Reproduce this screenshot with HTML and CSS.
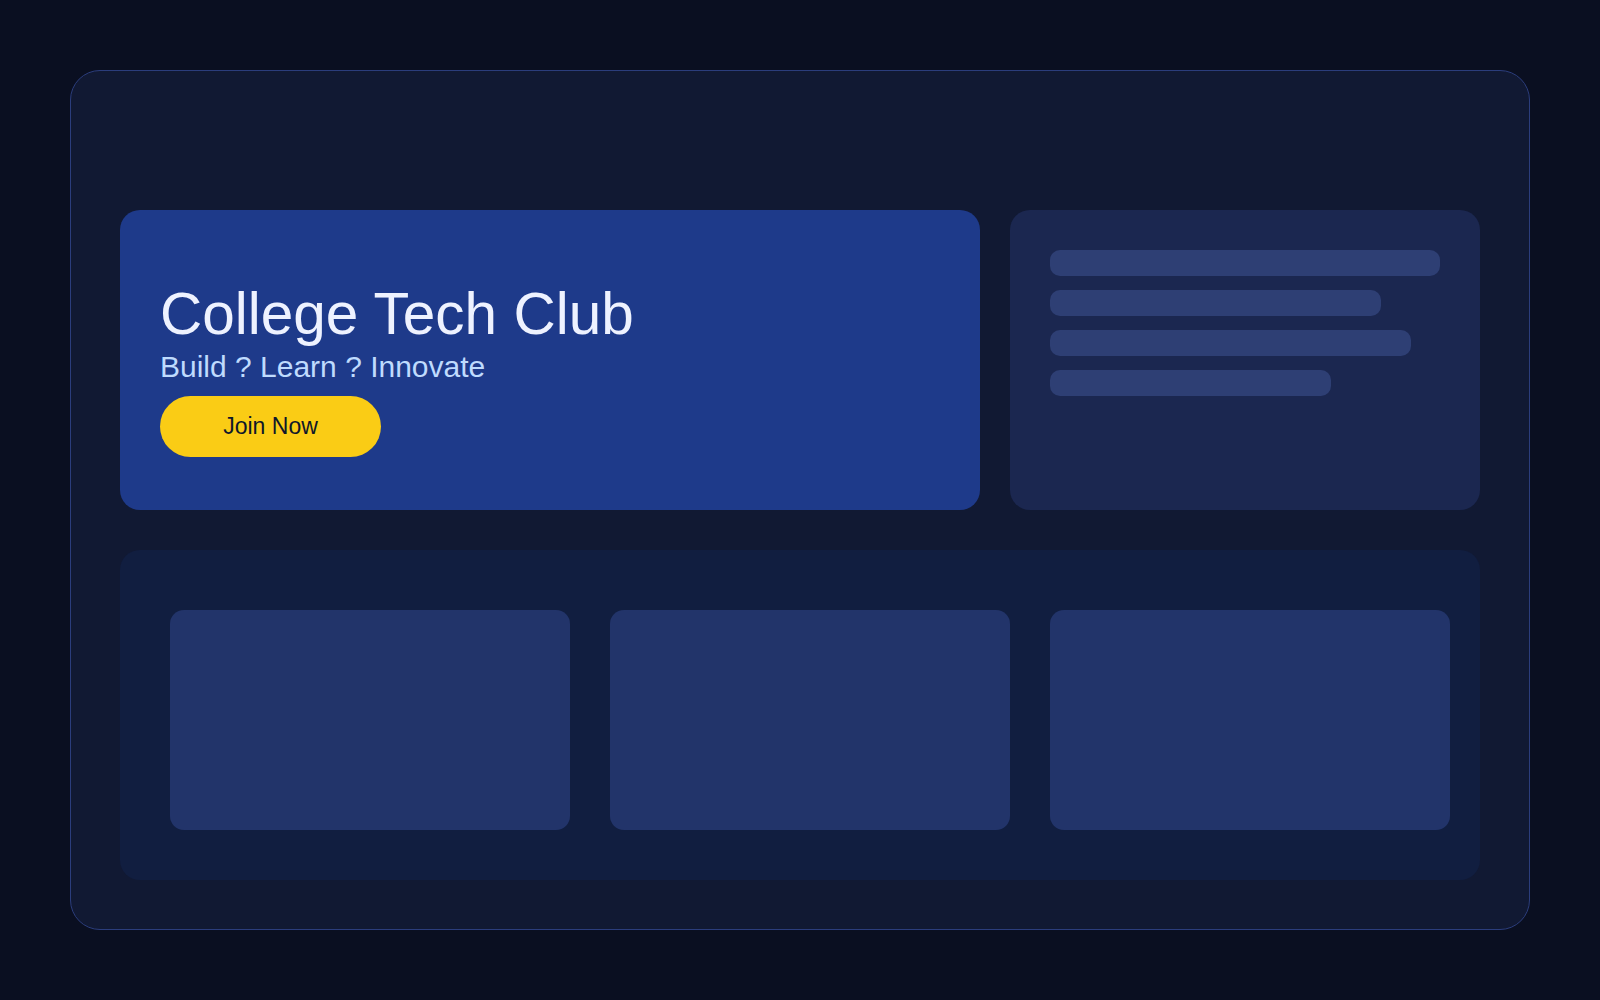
FILE: index.html
```html
<!DOCTYPE html>
<html lang="en">
<head>
<meta charset="utf-8">
<title>College Tech Club</title>
<link rel="stylesheet" href="styles.css">
</head>
<body>
  <div class="frame">
    <div class="top-row">
      <section class="hero">
        <h1 class="hero-title">College Tech Club</h1>
        <p class="hero-sub">Build ? Learn ? Innovate</p>
        <button class="join-btn">Join Now</button>
      </section>
      <aside class="side-panel">
        <div class="bar bar-1"></div>
        <div class="bar bar-2"></div>
        <div class="bar bar-3"></div>
        <div class="bar bar-4"></div>
      </aside>
    </div>
    <section class="cards">
      <div class="card"></div>
      <div class="card"></div>
      <div class="card"></div>
    </section>
  </div>
</body>
</html>
```

FILE: styles.css
```css
* {
  box-sizing: border-box;
}

html, body {
  margin: 0;
  padding: 0;
}

body {
  background: #0a0f21;
  font-family: "Liberation Sans", Arial, sans-serif;
  width: 1600px;
  height: 1000px;
  overflow: hidden;
}

.frame {
  margin: 70px;
  width: 1460px;
  height: 860px;
  background: #111933;
  border: 1px solid #2b3d7c;
  border-radius: 30px;
  padding: 139px 49px 49px;
  display: flex;
  flex-direction: column;
  gap: 40px;
}

.top-row {
  display: grid;
  grid-template-columns: 860px 470px;
  gap: 30px;
  height: 300px;
}

.hero {
  background: #1e3a8a;
  border-radius: 20px;
  padding: 70px 40px 0;
}

.hero-title {
  margin: 0;
  font-size: 58.5px;
  font-weight: 400;
  line-height: 1.15;
  color: #eef2ff;
}

.hero-sub {
  margin: 3px 0 11px;
  font-size: 30px;
  line-height: 1.15;
  color: #bfdbfe;
}

.join-btn {
  display: block;
  border: none;
  background: #facc15;
  color: #0f172a;
  font-family: "Liberation Sans", Arial, sans-serif;
  font-size: 23px;
  line-height: 1.15;
  padding: 17px 62px;
  border-radius: 31px;
  width: 221px;
  height: 61px;
}

.side-panel {
  background: #1b2750;
  border-radius: 20px;
  padding: 40px;
  display: flex;
  flex-direction: column;
  gap: 14px;
}

.bar {
  height: 26px;
  border-radius: 10px;
  background: #2e3f74;
}

.bar-1 { width: 390px; }
.bar-2 { width: 331px; }
.bar-3 { width: 361px; }
.bar-4 { width: 281px; }

.cards {
  height: 330px;
  background: #111e40;
  border-radius: 20px;
  padding: 60px 30px 50px 50px;
  display: grid;
  grid-template-columns: repeat(3, 400px);
  gap: 40px;
}

.card {
  height: 220px;
  background: #22346a;
  border-radius: 14px;
}
```
